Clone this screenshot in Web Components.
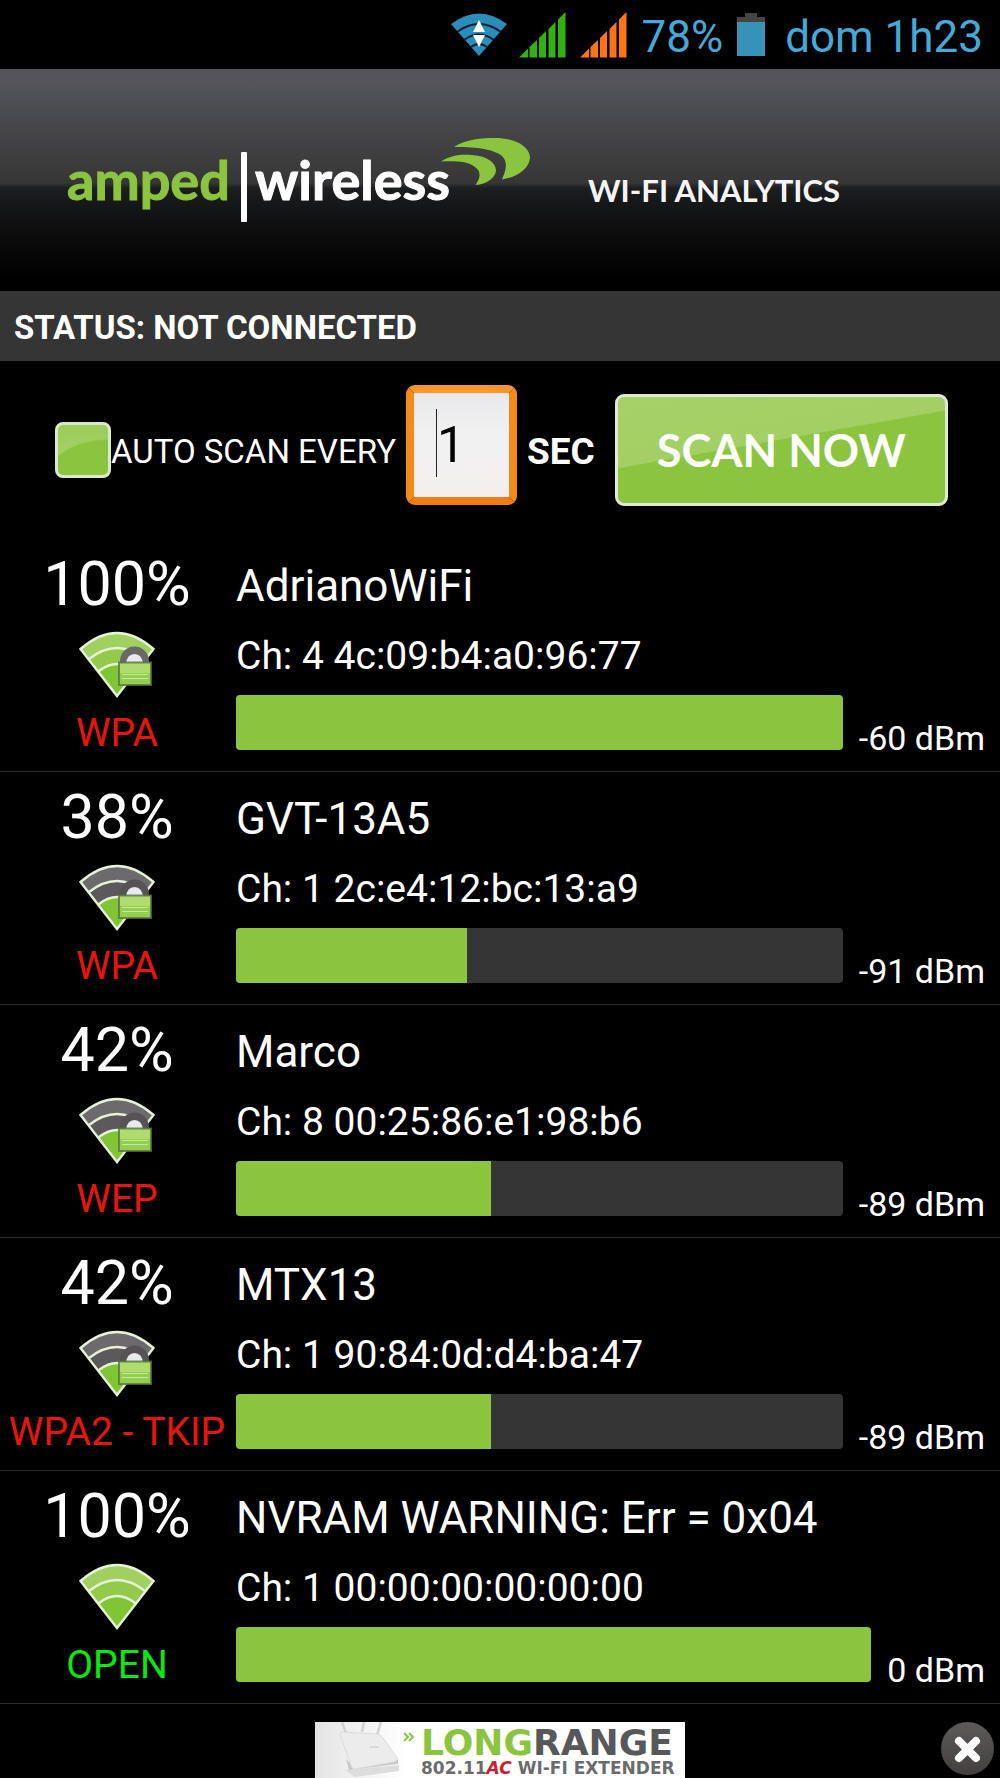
<!DOCTYPE html>
<html lang="en">
<head>
<meta charset="utf-8">
<meta name="viewport" content="width=device-width, initial-scale=1">
<title>Wi-Fi Analytics</title>
<style>
  body { margin: 0; background: #000; color: #fff; font-family: Roboto, "Noto Sans", sans-serif; }
</style>
</head>
<body>
<analytics-app></analytics-app>

<script>
const define = (name, html, init) => customElements.define(name, class extends HTMLElement {
  connectedCallback() {
    if (this.shadowRoot) return;
    const root = this.attachShadow({ mode: 'open' });
    root.innerHTML = typeof html === 'function' ? html(this) : html;
    if (init) init(this, root);
  }
});

/* Android status bar */
define('signal-bars', `
  <style>:host{display:block;color:#33b012} svg{display:block}</style>
  <svg width="47" height="46" viewBox="0 0 47 46" fill="currentColor" aria-hidden="true">
    <path d="M0 45.5 9 36.500V45.500zM10.500 35 18 28v17.500h-7.500zM20 26l7-7v26.500h-7zM29.500 17 36.500 10v35.500h-7zM39 7.500 46.500 0v45.500H39z"/>
  </svg>`, (el, root) => { if (el.hasAttribute('alt-sim')) root.querySelector('svg').style.color = '#ff7417'; });

define('status-bar', `
  <style>
    :host{display:flex;justify-content:flex-end;align-items:center;height:69px;padding:0 17px 0 0;background:#000;color:#45a9d8;font-size:44px;line-height:69px}
    svg{display:block}
    span{padding-top:5px;line-height:64px}
    .wifi{margin-right:12px} signal-bars{margin-right:14px}
    .pct{margin-right:14px} .bat{margin-right:20px}
  </style>
  <svg class="wifi" width="56" height="44" viewBox="0 0 56 44" aria-hidden="true">
    <path fill="#2b8db9" d="M0 11Q28-10 56 11L28 43z"/>
    <path fill="none" stroke="#04202d" stroke-width="2" d="M6 19Q28 3 50 19M13 27Q28 16 43 27M20 34Q28 28 36 34"/>
    <path fill="#fff" d="M28 7 34 19H22zM22 22H34L28 34z"/>
  </svg>
  <signal-bars></signal-bars><signal-bars alt-sim></signal-bars>
  <span class="pct">78%</span>
  <svg class="bat" width="28" height="43" viewBox="0 0 28 43" aria-hidden="true">
    <path fill="#444" d="M8 0h12v4h8v6H0V4h8z"/><path fill="#3792b8" d="M0 9h28v34H0z"/>
  </svg>
  <span>dom 1h23</span>`);

/* Brand header */
define('brand-header', `
  <style>
    :host{display:flex;align-items:center;box-sizing:border-box;height:222px;padding-left:60px;
      background:linear-gradient(#55545a 0,#54545a 16px,#4c4f54 30px,#464649 58px,#3e3e3f 88px,#363637 114px,#1d1e20 119px,#141517 140px,#0a0a0a 174px,#000 208px)}
    svg{display:block;flex:none} text{font-family:Lato,"Open Sans",sans-serif;font-weight:700}
  </style>
  <svg width="820" height="100" viewBox="60 130 820 100" role="img" aria-label="amped wireless Wi-Fi Analytics">
    <text x="67" y="200" font-size="54" fill="#8bc53f" stroke="#8bc53f">amped</text>
    <rect x="241" y="152" width="6" height="70" rx="1" fill="#fff"/>
    <text x="255" y="200" font-size="54" fill="#fff" stroke="#fff">wireless</text>
    <path fill="#8bc53f" d="M454 147C466 139 482 138 495 138C515 138 529 146 530 157C530 168 518 177 502 179.500C505 172 509 163 502 156C492 148 472 147 454 147zM441 161.500C451 155 461 154 472 155C488 156 496 163 496 171C495 178 487 184 475.500 185C481 178 481 171 475 167C467 161 455 161 441 161.500z"/>
    <text x="588" y="202" font-size="31" fill="#f4f4f4">WI-FI ANALYTICS</text>
  </svg>`);

define('connection-status', `
  <style>:host{display:block;background:#353535;padding:4px 14px 0;font-size:33px;line-height:66px;font-weight:700}</style>
  <slot></slot>`);

/* Scan controls */
define('scan-controls', `
  <style>
    :host{display:flex;align-items:center;height:178px;padding-left:55px;box-sizing:border-box}
    .auto{display:flex;align-items:center;font-size:33px;line-height:56px}
    .auto span,.unit{padding-top:4px}
    input,button{appearance:none;margin:0;box-sizing:border-box;font-family:inherit}
    .box{width:56px;height:56px;border:3px solid #dce8cb;border-radius:8px;
      background:radial-gradient(ellipse 60px 36px at 100% 100%,#8bc53f 96%,transparent),linear-gradient(#9acc58,#a5d168 60%,#8bc53f)}
    .sec{width:111px;height:120px;margin:0 10px 10px;padding:0 0 0 23px;border:8px solid #f58a1c;border-color:#f7962a #f58a1c #f07d13;border-radius:9px;
      background:linear-gradient(#222,#222) 22px 16px/1px 68px no-repeat,linear-gradient(#e9e9ec,#f1f1f1 40%,#f3efef);
      color:#000;font-size:50px;outline:none;caret-color:transparent}
    .unit{font-size:37px;font-weight:700;line-height:56px}
    button{width:333px;height:112px;margin-left:20px;padding:0;border:3px solid #e0ead2;border-radius:9px;
      background:linear-gradient(170deg,#a5d168 0,#a3d065 43%,#8bc53f 44%);
      color:#fff;font:700 45px/106px Lato,"Open Sans",sans-serif}
  </style>
  <label class="auto"><input class="box" type="checkbox"><span>AUTO SCAN EVERY</span></label>
  <input class="sec" id="sec" type="text" inputmode="numeric" value="1">
  <label class="unit" for="sec">SEC</label>
  <button type="button">SCAN NOW</button>`);

/* Wi-Fi strength fan with optional padlock */
define('wifi-fan', el => {
  const weak = el.hasAttribute('weak'), locked = el.hasAttribute('locked');
  const outer = weak ? '#6c6a6c' : '#a0d05f', mid = weak ? '#5b595b' : '#94ca4c';
  return `
  <style>:host{display:block} svg{display:block}</style>
  <svg width="76" height="68" viewBox="0 0 76 68" aria-hidden="true">
    <path fill="${outer}" d="M2 18Q38-14 74 18L38 64z"/>
    <path fill="${mid}" d="M10 28Q38 6 66 28L38 64z"/>
    <path fill="#80c534" d="M20 40Q38 26 56 40L38 64z"/>
    <path fill="none" stroke="#e6f2d8" stroke-width="2.400" d="M10 28Q38 6 66 28M20 40Q38 26 56 40M1.500 18Q38-14 74.500 18L38 65z"/>
    ${locked ? `
    <path fill="${weak ? '#555355' : '#6a686b'}" d="M41 34V30A14.500 14.500 0 0 1 70 30V34z"/>
    <path fill="#e9eaf0" d="M47 33Q48 23 55.500 23Q63 23 64 33z"/>
    <path fill="#aedd6e" stroke="#56703f" stroke-width="2" stroke-opacity=".8" d="M40 31.500H72V54H40z"/>
    <path fill="#93cf4e" d="M41 42H71V53H41z"/>
    <path stroke="#c7e89c" d="M43 43.500H69M43 47.500H69"/>` : ''}
  </svg>`;
});

/* One access point */
define('network-row', el => {
  const a = n => el.getAttribute(n) || '';
  return `
  <style>
    :host{display:grid;grid-template-columns:234px 1fr;column-gap:2px;height:232px;border-bottom:1px solid #2a2a2a}
    .side{display:flex;flex-direction:column;align-items:center}
    .pct{font-size:61px;line-height:90px}
    wifi-fan{height:70px;padding-top:2px;box-sizing:border-box}
    .sec{font-size:39px;line-height:68px;white-space:nowrap;color:#e8150f}
    .sec.open{color:#0be80b}
    .name{font-size:44px;line-height:94px;white-space:nowrap}
    .ch{font-size:39px;line-height:46px;white-space:nowrap}
    .level{display:flex;align-items:flex-end;gap:16px;padding:16px 15px 0 0;font-size:34px;line-height:40px;white-space:nowrap}
    progress{appearance:none;flex:1;min-width:0;height:55px;margin-bottom:8px;border:0;border-radius:4px;overflow:hidden;background:#353535}
    progress::-webkit-progress-bar{background:#353535}
    progress::-webkit-progress-value{background:#8bc53f}
  </style>
  <div class="side">
    <span class="pct">${a('quality')}%</span>
    <wifi-fan ${+a('quality') < 50 ? 'weak' : ''} ${a('security') === 'OPEN' ? '' : 'locked'}></wifi-fan>
    <span class="sec ${a('security') === 'OPEN' ? 'open' : ''}">${a('security')}</span>
  </div>
  <div>
    <div class="name"><slot></slot></div>
    <div class="ch">Ch: ${a('channel')} ${a('bssid')}</div>
    <div class="level"><progress max="100" value="${a('quality')}" aria-label="Signal quality"></progress><span>${a('dbm')} dBm</span></div>
  </div>`;
});

/* Advertisement */
define('ad-banner', `
  <style>
    :host{display:grid;grid-template-columns:1fr auto 1fr;padding-top:18px}
    a{grid-column:2;display:flex;width:370px;height:56px;box-sizing:border-box;overflow:hidden;text-decoration:none;
      background:linear-gradient(90deg,#e4e4e4,#fff 90px);font-family:"DejaVu Sans",sans-serif;font-weight:700}
    svg{display:block;flex:none}
    .copy{padding-top:4px;white-space:nowrap}
    .big{font-size:36px;line-height:33px;color:#8bc53f} .big b{color:#58585a}
    .small{font-size:17px;line-height:18px;color:#6b6b6d} .small i{color:#c8202c}
    button{justify-self:end;width:53px;height:53px;margin-right:6px;padding:0;border:0;border-radius:50%;background:linear-gradient(#5c5a5a,#453f3f)}
  </style>
  <a href="#">
    <svg width="106" height="57" viewBox="0 0 106 57" aria-hidden="true">
      <path fill="none" stroke="#d2d2d2" stroke-width="2.500" d="M27 0 31 11M49 0 47 10M66 0 62 13"/>
      <path fill="#ddd" d="M30 48 84 43V49L40 55z"/>
      <path fill="#c9c9c9" d="M31 37 34 48 83 42V37L40 46z"/>
      <path fill="#ececec" stroke="#dcdcdc" d="M26 10 62 12Q66 13 68 16L83 37Q82 39 78 40L40 47Q37 47 36 43L25 13z"/>
      <path stroke="#ccc" d="M54 25 64 25"/>
      <path fill="none" stroke="#8bc53f" stroke-width="2" d="M89 11 93 15 89 19M94 11 98 15 94 19"/>
    </svg>
    <div class="copy"><div class="big">LONG<b>RANGE</b></div><div class="small">802.11<i>AC</i> WI-FI EXTENDER</div></div>
  </a>
  <button type="button" aria-label="Close ad">
    <svg width="53" height="53" viewBox="0 0 53 53"><path stroke="#fff" stroke-width="8" stroke-linecap="round" d="M18 19 35 36M35 19 18 36"/></svg>
  </button>`);

define('analytics-app', `
  <style>:host{display:block;overflow:hidden}</style>
  <status-bar></status-bar>
  <brand-header></brand-header>
  <connection-status>STATUS: NOT CONNECTED</connection-status>
  <scan-controls></scan-controls>
  <network-row quality="100" security="WPA" channel="4" bssid="4c:09:b4:a0:96:77" dbm="-60">AdrianoWiFi</network-row>
  <network-row quality="38" security="WPA" channel="1" bssid="2c:e4:12:bc:13:a9" dbm="-91">GVT-13A5</network-row>
  <network-row quality="42" security="WEP" channel="8" bssid="00:25:86:e1:98:b6" dbm="-89">Marco</network-row>
  <network-row quality="42" security="WPA2 - TKIP" channel="1" bssid="90:84:0d:d4:ba:47" dbm="-89">MTX13</network-row>
  <network-row quality="100" security="OPEN" channel="1" bssid="00:00:00:00:00:00" dbm="0">NVRAM WARNING: Err = 0x04</network-row>
  <ad-banner></ad-banner>`);
</script>
</body>
</html>
